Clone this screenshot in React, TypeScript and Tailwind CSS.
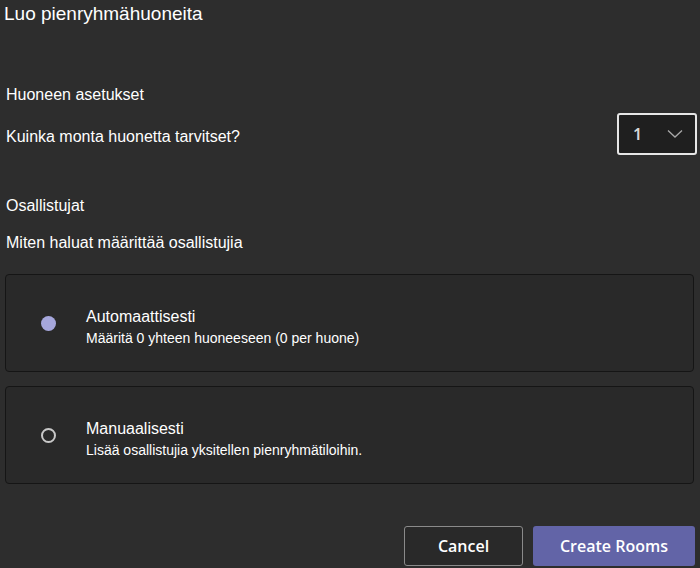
import React, { useState } from "react";

const options = [
  {
    id: "auto",
    title: "Automaattisesti",
    desc: "Määritä 0 yhteen huoneeseen (0 per huone)",
  },
  {
    id: "manual",
    title: "Manuaalisesti",
    desc: "Lisää osallistujia yksitellen pienryhmätiloihin.",
  },
];

const App = () => {
  const [mode, setMode] = useState("auto");

  return (
    <div className="w-[700px] h-[568px] overflow-hidden bg-[#2d2d2d] text-white font-['Liberation_Sans',Arial,sans-serif] flex flex-col">
      <h1 className="px-[4px] pt-[3px] text-[19px] leading-[22px]">
        Luo pienryhmähuoneita
      </h1>

      <p className="px-[6px] mt-[60px] text-[16px] leading-[20px]">
        Huoneen asetukset
      </p>
      <div className="flex items-center justify-between pl-[6px] pr-[3px] mt-[8px]">
        <p className="text-[16px] leading-[20px] pt-[6px]">
          Kuinka monta huonetta tarvitset?
        </p>
        <button className="w-[80px] h-[42px] rounded-[3px] border-2 border-[#e6e6e6] bg-[#1f1f1f] flex items-center justify-between pl-[14px] pr-[12px]">
          <span className="text-[16px] font-['Noto_Sans',sans-serif] font-semibold text-[#d6d6d6]">
            1
          </span>
          <svg width="16" height="10" viewBox="0 0 16 10" fill="none">
            <path d="M1 1.5 L8 8 L15 1.5" stroke="#a8a8a8" strokeWidth="1.3" />
          </svg>
        </button>
      </div>

      <p className="px-[6px] mt-[41px] text-[16px] leading-[20px]">
        Osallistujat
      </p>
      <p className="px-[6px] mt-[17px] text-[16px] leading-[20px]">
        Miten haluat määrittää osallistujia
      </p>

      <div className="flex flex-col gap-[14px] pl-[5px] pr-[6px] mt-[21px]">
        {options.map((o) => (
          <label
            key={o.id}
            onClick={() => setMode(o.id)}
            className="h-[98px] rounded-[4px] border border-[#151515] bg-[#292929] flex items-center cursor-pointer"
          >
            <span className="w-[80px] flex justify-center pl-[5px]">
              {mode === o.id ? (
                <span className="w-[15px] h-[15px] rounded-full bg-[#a6a7dc]" />
              ) : (
                <span className="w-[15px] h-[15px] rounded-full border-2 border-[#c8c8c8]" />
              )}
            </span>
            <span className="flex flex-col pt-[8px]">
              <span className="text-[16px] leading-[20px]">{o.title}</span>
              <span className="text-[14px] leading-[18px] mt-[2px]">
                {o.desc}
              </span>
            </span>
          </label>
        ))}
      </div>

      <div className="flex justify-end gap-[10px] pr-[5px] mt-auto mb-[2px]">
        <button className="w-[119px] h-[40px] rounded-[3px] border border-[#8a8a8a] bg-[#292929] text-[16px] font-semibold font-['Open_Sans',sans-serif]">
          Cancel
        </button>
        <button className="w-[162px] h-[40px] rounded-[3px] bg-[#6264a7] text-[16px] font-semibold font-['Open_Sans',sans-serif]">
          Create Rooms
        </button>
      </div>
    </div>
  );
};

export default App;
